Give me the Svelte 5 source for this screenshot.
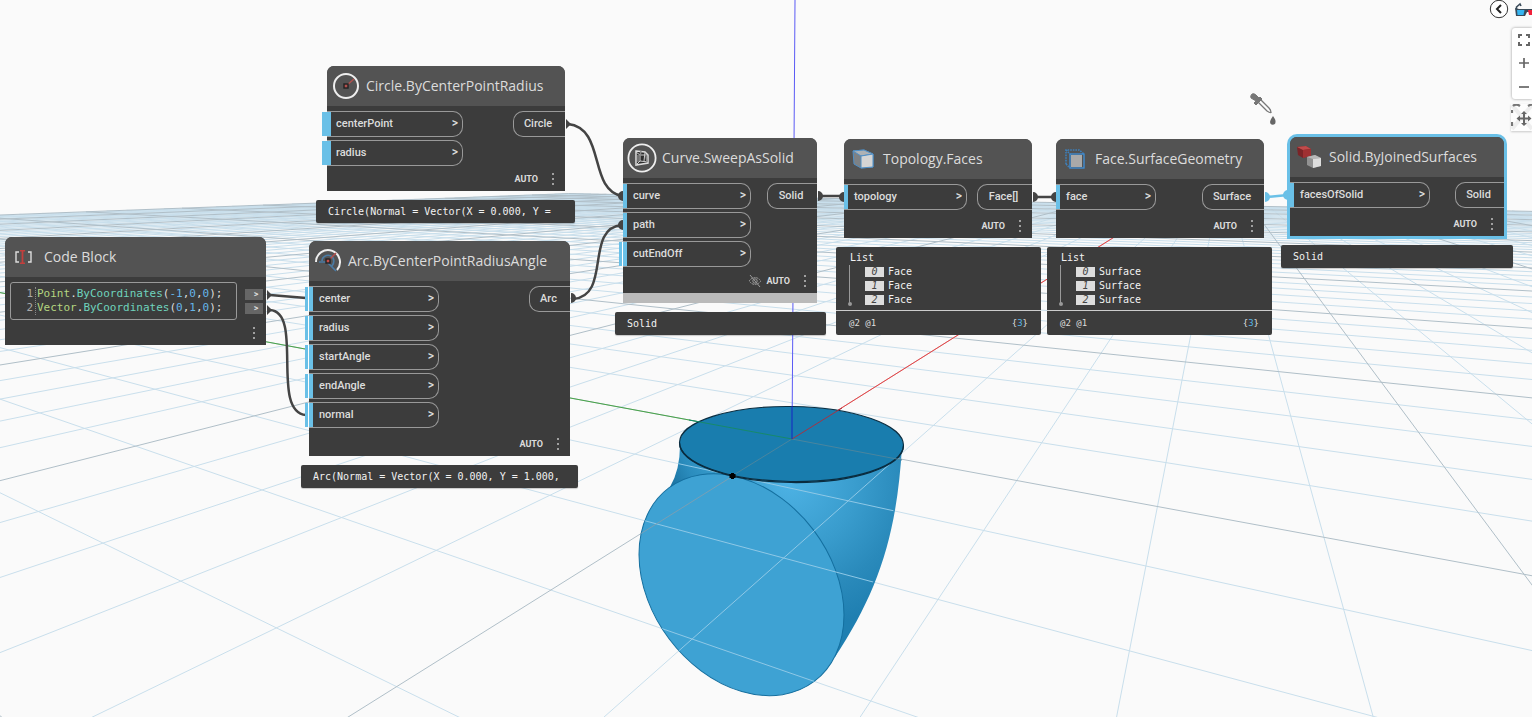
<script>
  // Perspective of the ground plane: origin, the two vanishing points and their weights.
  const origin = [792, 439];
  const vanishU = [1223, 169];
  const vanishV = [-658, 171];
  const a = 0.1196;
  const b = 0.0671;
  const extent = 55;

  function project(u, v) {
    const s = a * u;
    const t = b * v;
    const w = 1 + s + t;
    return [
      (origin[0] + s * vanishU[0] + t * vanishV[0]) / w,
      (origin[1] + s * vanishU[1] + t * vanishV[1]) / w
    ];
  }

  function segment(p, q) {
    return `M${p[0].toFixed(1)} ${p[1].toFixed(1)}L${q[0].toFixed(1)} ${q[1].toFixed(1)}`;
  }

  let minor = '';
  let major = '';
  for (let i = -extent; i <= extent; i++) {
    const vMin = Math.max(-extent, (0.1 - 1 - a * i) / b);
    const uMin = Math.max(-extent, (0.1 - 1 - b * i) / a);
    let d = '';
    if (vMin < extent) d += segment(project(i, vMin), project(i, extent));
    if (uMin < extent) d += segment(project(uMin, i), project(extent, i));
    if (i % 5 === 0) major += d;
    else minor += d;
  }
  const greenAxis = segment(origin, project(0, extent));
  const redAxis = segment(origin, project(extent, 0));

  const nodes = [
    { title: 'Circle.ByCenterPointRadius', icon: 'circle', x: 327, y: 66, w: 238, h: 125, inW: 136, outW: 52, tab: 'wide', inputs: ['centerPoint', 'radius'], output: 'Circle' },
    { title: 'Arc.ByCenterPointRadiusAngle', icon: 'arc', x: 309, y: 241, w: 261, h: 215, inW: 130, outW: 41, tab: 'split', inputs: ['center', 'radius', 'startAngle', 'endAngle', 'normal'], output: 'Arc' },
    { title: 'Curve.SweepAsSolid', icon: 'sweep', x: 623, y: 138, w: 194, h: 165, inW: 128, outW: 50, tab: 'last', inputs: ['curve', 'path', 'cutEndOff'], output: 'Solid', hidden: true },
    { title: 'Topology.Faces', icon: 'topology', x: 844, y: 139, w: 188, h: 99, inW: 123, outW: 55, inputs: ['topology'], output: 'Face[]' },
    { title: 'Face.SurfaceGeometry', icon: 'face', x: 1056, y: 139, w: 208, h: 99, inW: 100, outW: 62, inputs: ['face'], output: 'Surface' },
    { title: 'Solid.ByJoinedSurfaces', icon: 'solid', x: 1290, y: 137, w: 214, h: 99, inW: 140, outW: 49, inputs: ['facesOfSolid'], output: 'Solid', selected: true }
  ];

  const previews = [
    { text: 'Circle(Normal = Vector(X = 0.000, Y =', x: 316, y: 200, w: 259 },
    { text: 'Arc(Normal = Vector(X = 0.000, Y = 1.000,', x: 301, y: 465, w: 277 },
    { text: 'Solid', x: 615, y: 312, w: 211 },
    { text: 'Solid', x: 1281, y: 245, w: 232 }
  ];

  const lists = [
    { item: 'Face', x: 836, y: 247, w: 205 },
    { item: 'Surface', x: 1047, y: 247, w: 225 }
  ];
</script>

{#snippet icon(name)}
  {#if name === 'circle'}
    <svg width="28" height="28" viewBox="0 0 28 28" fill="none">
      <circle cx="14" cy="14" r="12" stroke="#eee" stroke-width="2" />
      <path d="M14 14 22 7" stroke="#b3504e" stroke-width="1.5" />
      <rect x="12" y="12" width="4" height="4" fill="#b3504e" stroke="#222" stroke-width="1.4" />
    </svg>
  {:else if name === 'arc'}
    <svg width="28" height="28" viewBox="0 0 28 28" fill="none">
      <path d="M2 15A12 12 0 1 1 23 23" stroke="#eee" stroke-width="2" />
      <path d="M5 15h8l9 9M8 14a6 6 0 0 1 11-3q2 4-1 8" stroke="#4b7ba3" stroke-width="1.7" />
      <path d="M14 14 22 6" stroke="#b3504e" stroke-width="1.5" />
      <rect x="12" y="12" width="4" height="4" fill="#c74f4b" stroke="#222" stroke-width="1.4" />
    </svg>
  {:else if name === 'sweep'}
    <svg width="30" height="30" viewBox="0 0 30 30" fill="none">
      <circle cx="15" cy="15" r="13.6" stroke="#eee" stroke-width="1.8" />
      <path d="M9 8 18 9 21 12V20L9 22Z" fill="#2e2e2e" stroke="#ddd" stroke-width="1.5" />
      <path d="M9 9 13 12H21M13 12V18L9 22M13 18 21 19M18 9 17 18" stroke="#ccc" />
      <path d="M14 8 13 13M19 13 20 19M11 12V19" stroke="#888" stroke-width="1.5" />
    </svg>
  {:else if name === 'topology'}
    <svg width="22" height="20" viewBox="0 0 22 20">
      <path d="M1 2 12 1 21 5V18L9 19 2 15Z" fill="#7d8185" stroke="#4f8fc6" />
      <path d="M1 2 12 1 21 5 9 7Z" fill="#aeb2b5" stroke="#4f8fc6" />
      <path d="M9 7 21 5V18L9 19Z" fill="#d5d5d5" stroke="#4f8fc6" />
    </svg>
  {:else if name === 'face'}
    <svg width="20" height="20" viewBox="0 0 20 20" fill="none">
      <path d="M1 15V1H14L19 5M1 1 5 5M1 15 5 19" stroke="#3e7fb9" stroke-width="1.6" stroke-dasharray="1.6 1" />
      <rect x="6" y="6" width="11" height="12" fill="#a9a9a9" />
      <rect x="5" y="5" width="14" height="14" stroke="#3e8fd9" stroke-width="1.3" />
    </svg>
  {:else if name === 'solid'}
    <svg width="24" height="22" viewBox="0 0 24 22">
      <path d="M0 1 9 0 14 3V9L6 12 1 9Z" fill="#7b2427" />
      <path d="M0 1 9 0 14 3 6 4Z" fill="#c04b4b" />
      <path d="M6 4 14 3V10L6 12Z" fill="#9f3032" />
      <path d="M10 11 18 9 24 12V20L16 22 10 19Z" fill="#929292" />
      <path d="M10 11 18 9 24 12 16 13Z" fill="#b8b8b8" />
      <path d="M16 13 24 12V20L16 22Z" fill="#dedede" />
    </svg>
  {/if}
{/snippet}

{#snippet dots()}
  <svg width="3" height="13" viewBox="0 0 3 13" fill="#a0a0a0">
    <rect width="2" height="2" /><rect y="5" width="2" height="2" /><rect y="10" width="2" height="2" />
  </svg>
{/snippet}

<main class="workspace">
  <svg class="layer" aria-hidden="true">
    <defs>
      <radialGradient id="sweepShade" gradientUnits="userSpaceOnUse" cx="790" cy="482" r="150">
        <stop offset="0" stop-color="#4db2e4" />
        <stop offset="0.45" stop-color="#399ccd" />
        <stop offset="0.75" stop-color="#2a8abb" />
        <stop offset="1" stop-color="#1f7fb1" />
      </radialGradient>
      <linearGradient id="shoulderShade" gradientUnits="userSpaceOnUse" x1="672" y1="490" x2="725" y2="465">
        <stop offset="0" stop-color="#1a719f" />
        <stop offset="0.4" stop-color="#2a8cbd" />
        <stop offset="1" stop-color="#3ea2d2" />
      </linearGradient>
      <clipPath id="solidClip">
        <path d="M680 445Q680 470 670 487L735 585 835 657Q890 575 902 453L900 448Z" />
        <ellipse cx="741.5" cy="584.7" rx="121" ry="90.4" transform="rotate(53.1 741.5 584.7)" />
      </clipPath>
    </defs>
    <path d={minor} class="grid-minor" />
    <path d={major} class="grid-major" />
    <path d={greenAxis} stroke="#47a447" />
    <path d={redAxis} stroke="#f04040" />
    <path d="M795 0 792 439" stroke="#5a5af5" />

    <path d="M680 445Q680 470 670 487L740 520 740 470Z" fill="url(#shoulderShade)" />
    <path d="M732 474 800 600 835 657C878 592 897 535 902 446L850 470Z" fill="url(#sweepShade)" />
    <ellipse cx="741.5" cy="584.7" rx="121" ry="90.4" transform="rotate(53.1 741.5 584.7)" fill="#3ea2d3" stroke="#146f9f" />
    <g clip-path="url(#solidClip)">
      <path d={minor} stroke="#8fc8e6" />
      <path d={major} stroke="#789fb5" />
    </g>
    <g transform="rotate(0.8 791.5 444)">
      <ellipse cx="791.5" cy="444" rx="112" ry="37.5" fill="#197dae" stroke="#0a2c3f" stroke-width="1.1" />
      <path d="M679.5 444A112 38.5 0 0 0 903.5 444" fill="none" stroke="#0a2c3f" stroke-width="1.2" />
    </g>
    <path d="M792 439 732 476M792 439 902 460" stroke="#49859f" />
    <path d="M792 439 689 420" stroke="#178a6b" />
    <path d="M792 439 842 408" stroke="#a53345" />
    <path d="M792 439V406" stroke="#1726c4" />
    <path d="M729.5 474h6v4h-6zM731 473h3v6h-3z" fill="#000" />

    <g fill="none" stroke="#444" stroke-width="2.5">
      <path d="M568 124C606 128 588 190 622 196" />
      <path d="M573 299C612 296 584 228 622 225" />
      <path d="M270 295 306 298" />
      <path d="M270 310C304 312 270 412 306 415" />
      <path d="M820 196H843M1035 197H1056" />
      <path d="M1267 197 1288 195" stroke="#6ac0e7" />
    </g>
    <g fill="#444">
      <path d="M566 119 571 124 566 129ZM571 293A5 5 0 0 1 571 303ZM267 290 272 295 267 300ZM267 305 272 310 267 315ZM818 191A5 5 0 0 1 818 201ZM1033 192A5 5 0 0 1 1033 202Z" />
      <path d="M623 191A5 5 0 0 0 623 201ZM623 220A5 5 0 0 0 623 230ZM844 192A5 5 0 0 0 844 202ZM1056 192A5 5 0 0 0 1056 202Z" />
      <path d="M1265 192A5 5 0 0 1 1265 202ZM1288 190A5 5 0 0 0 1288 200Z" fill="#6ac0e7" />
    </g>
    <g transform="translate(1250 93)">
      <path d="M8 9 17 18Q20 20 21 19.5Q21 17 19 15L11 7" fill="#fafafa" stroke="#777" stroke-width="1.3" />
      <path d="M2 1Q0 3 1 5L6 8 4 10 6 12 12 6 10 4 9 5 6 2Q4 0 2 1Z" fill="#777" stroke="#777" />
      <path d="M23 23Q26 27 25.500 29A2.700 2.700 0 0 1 20 29Q20 27 23 23Z" fill="#666" />
    </g>
  </svg>

  <section class="node code-node" style="left:5px;top:237px;width:261px;height:108px">
    <header>
      <span class="icon">
        <svg width="18" height="14" viewBox="0 0 18 14" fill="none">
          <path d="M4 2H1V12H4M13 2H16V12H13" stroke="#ddd" stroke-width="1.4" />
          <path d="M5 .7H10M5 13.3H10M7.500 1V13" stroke="#c23f3d" stroke-width="1.8" />
        </svg>
      </span>
      <h2>Code Block</h2>
    </header>
    <div class="code-body">
      <div class="editor">
        <div class="numbers"><span>1</span><span>2</span></div>
        <code>
          <span><b>Point</b>.<i>ByCoordinates</i>(<em>-1</em>,<em>0</em>,<em>0</em>);</span>
          <span><b>Vector</b>.<i>ByCoordinates</i>(<em>0</em>,<em>1</em>,<em>0</em>);</span>
        </code>
      </div>
      <div class="code-ports">
        <button aria-label="Output line 1">&gt;</button>
        <button aria-label="Output line 2">&gt;</button>
      </div>
    </div>
    <footer><button class="more" aria-label="Node options">{@render dots()}</button></footer>
  </section>

  {#each nodes as node}
    <section
      class="node"
      class:selected={node.selected}
      style="left:{node.x}px;top:{node.y}px;width:{node.w}px;height:{node.h}px"
    >
      <header>
        <span class="icon">{@render icon(node.icon)}</span>
        <h2>{node.title}</h2>
      </header>
      <div class="ports">
        <div class="inputs" style="width:{node.inW}px">
          {#each node.inputs as port, i}
            <button
              class="port"
              class:wide={node.tab === 'wide'}
              class:split={node.tab === 'split' || (node.tab === 'last' && i === node.inputs.length - 1)}
            >
              <span>{port}</span><span class="arrow">&gt;</span>
            </button>
          {/each}
        </div>
        <button class="port out" style="width:{node.outW}px">{node.output}</button>
      </div>
      <footer>
        {#if node.hidden}
          <svg class="eye" width="14" height="12" viewBox="0 0 14 12" fill="none" stroke="#9a9a9a">
            <path d="M1 6Q7-1 13 6Q7 13 1 6Z" stroke-dasharray="2 .8" />
            <circle cx="7" cy="6" r="2.2" /><path d="M2 0 12 12" />
          </svg>
        {/if}
        <span class="auto">AUTO</span>
        <button class="more" aria-label="Node options">{@render dots()}</button>
      </footer>
      {#if node.hidden}<div class="state-bar"></div>{/if}
    </section>
  {/each}

  {#each previews as preview}
    <div class="preview" style="left:{preview.x}px;top:{preview.y}px;width:{preview.w}px">{preview.text}</div>
  {/each}

  {#each lists as list}
    <div class="list" style="left:{list.x}px;top:{list.y}px;width:{list.w}px">
      <div class="tree">
        <div class="root">List</div>
        <ol>
          {#each [0, 1, 2] as n}
            <li><span class="index">{n}</span>{list.item}</li>
          {/each}
        </ol>
      </div>
      <div class="levels"><span>@2 @1</span><span>&#123;<strong>3</strong>&#125;</span></div>
    </div>
  {/each}

  <aside class="tools">
    <div class="top-tools">
      <button class="collapse" aria-label="Collapse">
        <svg width="20" height="20" viewBox="0 0 20 20" fill="none">
          <circle cx="10" cy="9" r="8.7" fill="#fff" stroke="#333" />
          <path d="M12 5 8 9 12 13" stroke="#222" stroke-width="2" />
        </svg>
      </button>
      <button class="glasses" aria-label="3D view">
        <svg width="17" height="20" viewBox="0 0 17 20" fill="none">
          <path d="M1.500 10V7L5 4 6 6" stroke="#394a59" stroke-width="1.600" />
          <path d="M0 8 4 9H17V12H12L10 16H1Z" fill="#394a59" />
          <path d="M2 10H9.500L8.500 15H2.500Z" fill="#35b5f1" />
          <path d="M13 10H17V15H14Z" fill="#f0203a" />
        </svg>
      </button>
    </div>
    <div class="zoom-tools">
      <button aria-label="Zoom to fit">
        <svg width="12" height="12" viewBox="0 0 12 12" fill="none" stroke="#666" stroke-width="2"><path d="M1 4V1H4M8 1H11V4M11 8V11H8M4 11H1V8" /></svg>
      </button>
      <button aria-label="Zoom in">
        <svg width="12" height="12" viewBox="0 0 12 12" stroke="#666" stroke-width="1.700"><path d="M1 6H11M6 1V11" /></svg>
      </button>
      <button aria-label="Zoom out">
        <svg width="12" height="12" viewBox="0 0 12 12" stroke="#666" stroke-width="1.700"><path d="M1 6H11" /></svg>
      </button>
    </div>
    <button class="pan" aria-label="Pan">
      <svg width="21" height="27" viewBox="0 0 21 27" fill="none">
        <path d="M1 1 21 25M1 25 21 1" stroke="#eee" stroke-width="4" />
        <path d="M2 2Q5-1 9 2M17 2Q20 0 22 1M1 6V9M1 18V22" stroke="#777" stroke-width="2.200" />
        <path d="M13 9V20M7 14.500H19" stroke="#666" stroke-width="2" />
        <path d="M13 7 16 10H10ZM13 22 16 19H10ZM5.500 14.500 9 11.500V17.500ZM20.500 14.500 17 11.500V17.500Z" fill="#666" />
      </svg>
    </button>
  </aside>
</main>

<style>
  :global(body) {
    margin: 0;
  }
  .workspace {
    position: relative;
    height: 100vh;
    overflow: hidden;
    background: #fafafa;
    font-family: Roboto, 'Open Sans', sans-serif;
    color: #dcdcdc;
  }
  button {
    margin: 0;
    padding: 0;
    border: 0;
    background: none;
    font: inherit;
    color: inherit;
  }
  svg {
    display: block;
  }
  .layer {
    position: absolute;
    inset: 0;
    width: 100%;
    height: 100%;
  }
  .grid-minor {
    stroke: #c9dfec;
  }
  .grid-major {
    stroke: #b0bfc8;
  }
  .node {
    position: absolute;
    display: flex;
    flex-direction: column;
    box-sizing: border-box;
    border-radius: 7px 7px 0 0;
    background: #3c3c3c;
  }
  .selected {
    box-shadow: 0 0 0 3px #6ac0e7;
  }
  header {
    display: flex;
    align-items: center;
    flex: none;
    height: 40px;
    padding-left: 4px;
    border-radius: 7px 7px 0 0;
    background: #535353;
  }
  .icon {
    display: flex;
    justify-content: center;
    width: 30px;
    margin-right: 5px;
  }
  h2 {
    margin: 0;
    font-family: 'Open Sans', sans-serif;
    font-size: 14px;
    font-weight: 400;
    line-height: 20px;
    white-space: nowrap;
  }
  .ports {
    display: flex;
    justify-content: space-between;
    align-items: flex-start;
    padding-top: 5px;
  }
  .inputs {
    display: flex;
    flex-direction: column;
    gap: 3px;
  }
  .port {
    position: relative;
    display: flex;
    align-items: center;
    justify-content: space-between;
    box-sizing: border-box;
    height: 26px;
    padding: 0 4px 2px 10px;
    border: 1px solid #999;
    border-left: 0;
    border-radius: 0 10px 10px 0;
    font-size: 11px;
    font-weight: 500;
  }
  .port:not(.out)::before {
    content: '';
    position: absolute;
    left: 0;
    top: 0;
    bottom: 0;
    width: 4px;
    background: #6ac0e7;
  }
  .port.wide {
    padding-left: 9px;
  }
  .port.wide::before {
    left: -5px;
    width: 9px;
  }
  .port.split::after {
    content: '';
    position: absolute;
    left: -4px;
    top: 0;
    bottom: 0;
    width: 3px;
    background: #6ac0e7;
    border-right: 1px solid #fff;
  }
  .arrow {
    font-size: 12px;
  }
  .port.out {
    justify-content: center;
    padding: 0 3px 2px 0;
    border-left: 1px solid #999;
    border-right: 0;
    border-radius: 10px 0 0 10px;
  }
  footer {
    display: flex;
    align-items: center;
    justify-content: flex-end;
    height: 24px;
    margin-top: auto;
    padding-right: 10px;
  }
  .auto {
    margin-right: 14px;
    font-size: 9px;
    font-weight: 700;
  }
  .eye {
    margin-right: 4px;
  }
  .state-bar {
    height: 10px;
    background: #bababa;
  }
  .code-body {
    display: flex;
    align-items: center;
    padding: 5px 3px 0 5px;
    gap: 8px;
  }
  .editor {
    display: flex;
    box-sizing: border-box;
    width: 227px;
    height: 38px;
    padding: 4px 0;
    border: 1px solid #999;
    border-radius: 3px;
    font-family: 'DejaVu Sans Mono', monospace;
    font-size: 11px;
    line-height: 14px;
  }
  .numbers {
    display: flex;
    flex-direction: column;
    width: 22px;
    padding-right: 2px;
    border-right: 1px dotted #888;
    text-align: right;
    color: #aaa;
  }
  code {
    display: flex;
    flex-direction: column;
    padding-left: 1px;
    font: inherit;
    white-space: nowrap;
  }
  code b {
    font-weight: 400;
    color: #b5d680;
  }
  code i {
    font-style: normal;
    color: #6fd3bd;
  }
  code em {
    font-style: normal;
    color: #65b5e8;
  }
  .code-ports {
    display: flex;
    flex-direction: column;
    gap: 3px;
  }
  .code-ports button {
    width: 18px;
    height: 11px;
    padding-left: 4px;
    background: #666;
    font-size: 9px;
    font-weight: 700;
    line-height: 11px;
  }
  .preview {
    position: absolute;
    box-sizing: border-box;
    height: 23px;
    padding-left: 12px;
    border-radius: 2px;
    background: #3c3c3c;
    box-shadow: 0 1px 1px #0003;
    color: #f2f2f2;
    font-family: 'DejaVu Sans Mono', monospace;
    font-size: 10px;
    line-height: 23px;
    white-space: nowrap;
  }
  .list {
    position: absolute;
    border-radius: 2px;
    background: #3c3c3c;
    font-family: 'DejaVu Sans Mono', monospace;
    font-size: 10px;
    line-height: 14px;
    color: #f2f2f2;
  }
  .tree {
    position: relative;
    padding: 4px 14px 3px;
    border-bottom: 1px solid #ccc;
  }
  .tree::before {
    content: '';
    position: absolute;
    left: 13px;
    top: 18px;
    width: 1px;
    height: 38px;
    background: #999;
  }
  .tree::after {
    content: '';
    position: absolute;
    left: 12px;
    top: 55px;
    width: 4px;
    height: 4px;
    border-radius: 2px;
    background: #999;
  }
  ol {
    margin: 0;
    padding: 0 0 0 15px;
    list-style: none;
  }
  li {
    display: flex;
    align-items: center;
    gap: 4px;
  }
  .index {
    width: 19px;
    height: 10px;
    background: #ddd;
    color: #444;
    font-style: italic;
    line-height: 10px;
    text-align: center;
  }
  .levels {
    display: flex;
    justify-content: space-between;
    padding: 5px 13px;
    font-size: 9px;
    color: #dcdcdc;
  }
  .levels strong {
    color: #55b5e8;
    font-weight: 400;
  }
  .tools {
    position: absolute;
    top: 0;
    right: 0;
    display: flex;
    flex-direction: column;
    align-items: flex-end;
  }
  .top-tools {
    display: flex;
    align-items: center;
    gap: 6px;
    height: 20px;
  }
  .zoom-tools {
    display: flex;
    flex-direction: column;
    align-items: center;
    justify-content: space-around;
    box-sizing: border-box;
    width: 20px;
    height: 71px;
    margin-top: 8px;
    padding-left: 4px;
    border-radius: 3px 0 0 3px;
    background: #fff;
    box-shadow: 0 0 3px #0006;
  }
  .pan {
    margin-top: 5px;
    background: #fff8;
    box-shadow: 0 1px 2px #0003;
  }
</style>
